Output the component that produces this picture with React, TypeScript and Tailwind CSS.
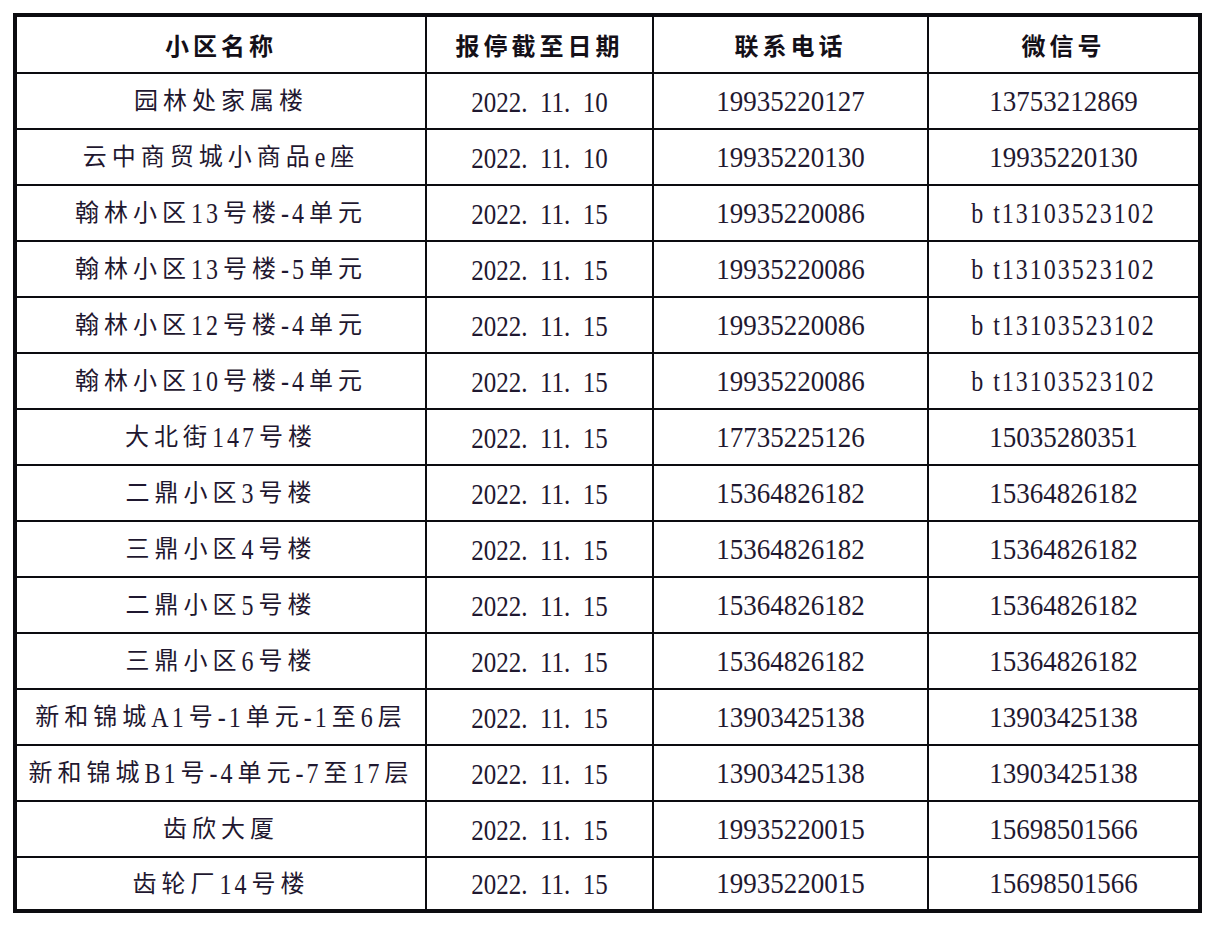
const rows: [string, string, string, string][] = [
  ["园林处家属楼", "2022.  11.  10", "19935220127", "13753212869"],
  ["云中商贸城小商品e座", "2022.  11.  10", "19935220130", "19935220130"],
  ["翰林小区13号楼-4单元", "2022.  11.  15", "19935220086", "bt13103523102"],
  ["翰林小区13号楼-5单元", "2022.  11.  15", "19935220086", "bt13103523102"],
  ["翰林小区12号楼-4单元", "2022.  11.  15", "19935220086", "bt13103523102"],
  ["翰林小区10号楼-4单元", "2022.  11.  15", "19935220086", "bt13103523102"],
  ["大北街147号楼", "2022.  11.  15", "17735225126", "15035280351"],
  ["二鼎小区3号楼", "2022.  11.  15", "15364826182", "15364826182"],
  ["三鼎小区4号楼", "2022.  11.  15", "15364826182", "15364826182"],
  ["二鼎小区5号楼", "2022.  11.  15", "15364826182", "15364826182"],
  ["三鼎小区6号楼", "2022.  11.  15", "15364826182", "15364826182"],
  ["新和锦城A1号-1单元-1至6层", "2022.  11.  15", "13903425138", "13903425138"],
  ["新和锦城B1号-4单元-7至17层", "2022.  11.  15", "13903425138", "13903425138"],
  ["齿欣大厦", "2022.  11.  15", "19935220015", "15698501566"],
  ["齿轮厂14号楼", "2022.  11.  15", "19935220015", "15698501566"],
];

const headers = ["小区名称", "报停截至日期", "联系电话", "微信号"];

const serif = "font-['Liberation_Serif','Noto_Sans_CJK_SC',serif]";

// Chinese runs get wide spacing, latin/digit runs are stretched taller like the scan
function Name({ text }: { text: string }) {
  const parts = text.split(/([A-Za-z0-9-]+)/).filter(Boolean);
  return (
    <span className={`${serif} text-[24px] leading-none text-[#1f1830] flex items-center`}>
      {parts.map((p, i) =>
        /^[A-Za-z0-9-]+$/.test(p) ? (
          <span key={i} className="inline-block scale-y-[1.22] tracking-[3px] mr-[2px]">
            {p}
          </span>
        ) : (
          <span key={i} className="tracking-[5px]">
            {p}
          </span>
        )
      )}
    </span>
  );
}

function Num({ value, size }: { value: string; size: string }) {
  if (value.startsWith("bt")) {
    return (
      <span className={`${serif} inline-block scale-y-[1.22] text-[24px] tracking-[2px] leading-none text-[#1f1830]`}>
        <span className="mr-[8px]">b</span>t{value.slice(2)}
      </span>
    );
  }
  return (
    <span className={`${serif} inline-block ${size} whitespace-pre leading-none text-[#1f1830]`}>
      {value}
    </span>
  );
}

export default function App() {
  return (
    <div className="min-h-screen bg-white pt-[13px] pl-[13px]">
      <div className="w-[1189px] border-4 border-[#0c0c10] bg-[#0c0c10]">
        <div className="grid grid-cols-[408px_225px_273px_269px] grid-rows-[55px_repeat(14,54px)_51px] gap-[2px]">
          {headers.map((h) => (
            <div key={h} className="bg-white flex items-center justify-center">
              <span className="font-['Noto_Sans_CJK_SC',sans-serif] font-bold text-[24px] tracking-[4px] text-[#141018] leading-none">
                {h}
              </span>
            </div>
          ))}
          {rows.map(([name, date, phone, wechat], i) => (
            <div key={i} className="contents">
              <div className="bg-white flex items-center justify-center">
                <Name text={name} />
              </div>
              <div className="bg-white flex items-center justify-center">
                <Num value={date} size="text-[25px] scale-y-[1.22]" />
              </div>
              <div className="bg-white flex items-center justify-center">
                <Num value={phone} size="text-[27px] scale-y-[1.12]" />
              </div>
              <div className="bg-white flex items-center justify-center">
                <Num value={wechat} size="text-[27px] scale-y-[1.12]" />
              </div>
            </div>
          ))}
        </div>
      </div>
    </div>
  );
}
